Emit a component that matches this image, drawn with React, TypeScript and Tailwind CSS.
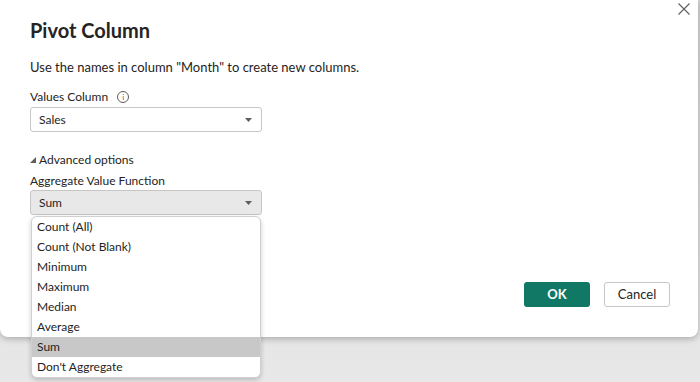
const options = ['Count (All)', 'Count (Not Blank)', 'Minimum', 'Maximum', 'Median', 'Average', 'Sum', "Don't Aggregate"];

function Caret() {
    return (
        <svg width="7" height="4" viewBox="0 0 7 4" className="text-[#605e5c]">
            <path d="M0 0 L7 0 L3.5 4 Z" fill="currentColor" />
        </svg>
    );
}

export default function App() {
    const selected = 'Sum';

    return (
        <div className="relative w-[700px] h-[382px] overflow-hidden bg-gradient-to-b from-[#d4d4d4] to-[#e8e8e8] font-['Segoe_UI','Lato',sans-serif] text-[#252423]">
            {/* Dialog */}
            <div className="relative w-[698px] h-[337px] bg-white rounded-b-[8px] shadow-[0_2px_6px_rgba(0,0,0,0.25)] px-[30px] pt-[16px]">
                <button className="absolute right-[8px] top-[3px] text-[#605e5c]">
                    <svg width="12" height="12" viewBox="0 0 12 12">
                        <path d="M0.5 0.5 L11.5 11.5 M11.5 0.5 L0.5 11.5" stroke="currentColor" strokeWidth="1.1" />
                    </svg>
                </button>

                <h1 className="text-[20px] font-bold leading-[28px] text-[#252423]">Pivot Column</h1>

                <p className="mt-[13px] text-[13px] leading-[20px]">Use the names in column "Month" to create new columns.</p>

                <div className="mt-[11px] flex items-center gap-[9px] text-[12px] leading-[18px]">
                    Values Column
                    <span className="w-[12px] h-[12px] rounded-full border border-[#605e5c] flex items-center justify-center text-[8px] leading-none text-[#605e5c]">i</span>
                </div>
                <div className="mt-[1px] w-[232px] h-[25px] border border-[#c8c6c4] rounded-[3px] flex items-center justify-between pl-[8px] pr-[9px] text-[12px]">
                    Sales
                    <Caret />
                </div>

                <div className="mt-[19px] flex items-center gap-[3px] text-[12px] leading-[18px]">
                    <svg width="6" height="6" viewBox="0 0 6 6" className="text-[#605e5c]">
                        <path d="M6 0 L6 6 L0 6 Z" fill="currentColor" />
                    </svg>
                    Advanced options
                </div>
                <div className="mt-[3px] text-[12px] leading-[18px]">Aggregate Value Function</div>

                <div className="relative w-[232px]">
                    <div className="h-[25px] border border-[#c8c6c4] bg-[#e8e8e8] rounded-[3px] flex items-center justify-between pl-[8px] pr-[9px] text-[12px]">
                        {selected}
                        <Caret />
                    </div>

                    {/* Dropdown list */}
                    <ul className="absolute left-[1px] top-[26px] w-[230px] bg-white border border-[#d0d0d0] rounded-[6px] shadow-[0_2px_5px_rgba(0,0,0,0.2)] overflow-hidden z-10">
                        {options.map((opt) => (
                            <li
                                key={opt}
                                className={`h-[20px] leading-[20px] pl-[5px] text-[12px] ${opt === selected ? 'bg-[#c8c8c8]' : ''}`}
                            >
                                {opt}
                            </li>
                        ))}
                    </ul>
                </div>

                <div className="absolute right-[28px] top-[282px] flex gap-[14px]">
                    <button className="w-[66px] h-[25px] bg-[#117865] text-white font-bold text-[13px] rounded-[3px]">OK</button>
                    <button className="w-[66px] h-[25px] bg-white border border-[#c8c6c4] text-[#252423] text-[13px] rounded-[3px]">Cancel</button>
                </div>
            </div>
        </div>
    );
}
